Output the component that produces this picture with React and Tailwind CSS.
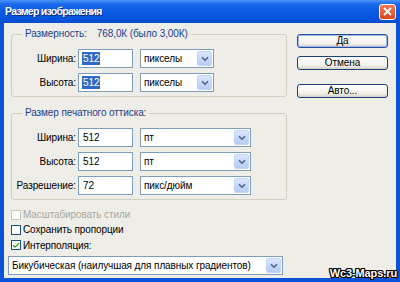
import { Check } from 'lucide-react'

function Chevron() {
  return (
    <svg width="8" height="6" viewBox="0 0 8 6">
      <path d="M1 1.2 L4 4.2 L7 1.2" fill="none" stroke="#4d6185" strokeWidth="1.6" />
    </svg>
  )
}

function Select({ value, w }) {
  return (
    <div className={`h-[19px] ${w} border border-[#7f9db9] bg-white flex items-center justify-between pl-[3px] pr-[1px]`}>
      <span className="whitespace-nowrap">{value}</span>
      <span className="w-[15px] h-[15px] shrink-0 rounded-[2px] border border-[#c3d3fd] bg-[linear-gradient(to_bottom,#dbe6fe,#b7cbf7)] flex items-center justify-center">
        <Chevron />
      </span>
    </div>
  )
}

function Row({ label, value, unit, selected, selW }) {
  return (
    <div className="flex items-center h-[19px]">
      <span className="w-[66px] text-right pr-[2px]">{label}</span>
      <div className="w-[55px] h-[19px] border border-[#7f9db9] bg-white flex items-center pl-[3px]">
        {selected ? <span className="bg-[#316ac5] text-white px-[1px] leading-[13px]">{value}</span> : <span className="px-[1px]">{value}</span>}
      </div>
      <div className="ml-[7px]">
        <Select value={unit} w={selW} />
      </div>
    </div>
  )
}

function Group({ title, children }) {
  return (
    <fieldset className="border border-[#d0d0bf] rounded-[3px] pt-[9px] pb-[4px]">
      <legend className="ml-[10px] px-[3px] leading-[12px] text-[#21428a]">{title}</legend>
      <div className="flex flex-col gap-[5px]">{children}</div>
    </fieldset>
  )
}

function Box({ checked, disabled }) {
  return (
    <span className={`w-[10px] h-[10px] border bg-white flex items-center justify-center mr-[2px] ${disabled ? 'border-[#cac8bb]' : 'border-[#1c5180]'}`}>
      {checked && <Check size={9} strokeWidth={3.5} color="#21a121" />}
    </span>
  )
}

function Button({ label, main }) {
  return (
    <div className={`h-[14px] w-[91px] rounded-[3px] border ${main ? 'border-[#2a4f9a] shadow-[inset_0_0_0_1px_#9db9eb]' : 'border-[#1d3f78]'} bg-[linear-gradient(to_bottom,#ffffff,#f1f0ea_70%,#d6d0c5)] flex items-center justify-center leading-none`}>
      {label}
    </div>
  )
}

export default function App() {
  return (
    <div className="w-[400px] h-[282px] bg-[#0b53d6] flex flex-col font-['Liberation_Sans',Arial,sans-serif] text-[10px] tracking-[-0.1px] text-black overflow-hidden">
      <div className="h-[23px] shrink-0 flex items-center justify-between pl-[5px] pr-[4px] bg-[linear-gradient(to_bottom,#4c93f6_0%,#1a68ec_18%,#0a5ae2_50%,#0654dc_85%,#0a4bc6_100%)]">
        <span className="text-white font-bold text-[10.5px] tracking-[-0.7px] [text-shadow:1px_1px_0_#0a2a7a]">Размер изображения</span>
        <span className="w-[17px] h-[16px] rounded-[3px] border border-white bg-[linear-gradient(to_bottom,#f07a55,#d9471c)] flex items-center justify-center">
          <svg width="9" height="9" viewBox="0 0 9 9">
            <path d="M1 1 L8 8 M8 1 L1 8" stroke="white" strokeWidth="1.8" />
          </svg>
        </span>
      </div>
      <div className="flex-1 mx-[4px] mb-[4px] bg-[#eeede7] relative flex">
        <div className="w-[279px] ml-[4px] flex flex-col pt-[5px]">
          <div className="ml-[3px]">
            <Group title={<>Размерность:<span className="ml-[10px]">768,0К (было 3,00К)</span></>}>
              <Row label="Ширина:" value="512" unit="пикселы" selected selW="w-[74px]" />
              <Row label="Высота:" value="512" unit="пикселы" selected selW="w-[74px]" />
            </Group>
          </div>
          <div className="ml-[3px] mt-[10px]">
            <Group title="Размер печатного оттиска:">
              <Row label="Ширина:" value="512" unit="пт" selW="w-[111px]" />
              <Row label="Высота:" value="512" unit="пт" selW="w-[111px]" />
              <Row label="Разрешение:" value="72" unit="пикс/дюйм" selW="w-[111px]" />
            </Group>
          </div>
          <div className="ml-[3px] mt-[7px] flex flex-col">
            <div className="h-[15px] flex items-center text-[#aca899]"><Box disabled />Масштабировать стили</div>
            <div className="h-[15px] flex items-center"><Box />Сохранить пропорции</div>
            <div className="h-[16px] flex items-center"><Box checked />Интерполяция:</div>
          </div>
          <div className="mt-[3px]">
            <Select value="Бикубическая (наилучшая для плавных градиентов)" w="w-[275px]" />
          </div>
        </div>
        <div className="ml-[10px] pt-[11px] flex flex-col">
          <Button label="Да" main />
          <div className="mt-[8px]"><Button label="Отмена" /></div>
          <div className="mt-[14px]"><Button label="Авто..." /></div>
        </div>
        <span className="absolute right-[-1px] bottom-[-3px] font-bold text-[11px] text-white [text-shadow:1px_0_0_#000,-1px_0_0_#000,0_1px_0_#000,0_-1px_0_#000,1px_1px_0_#000,-1px_-1px_0_#000,1px_-1px_0_#000,-1px_1px_0_#000]">Wc3-Maps.ru</span>
      </div>
    </div>
  )
}
